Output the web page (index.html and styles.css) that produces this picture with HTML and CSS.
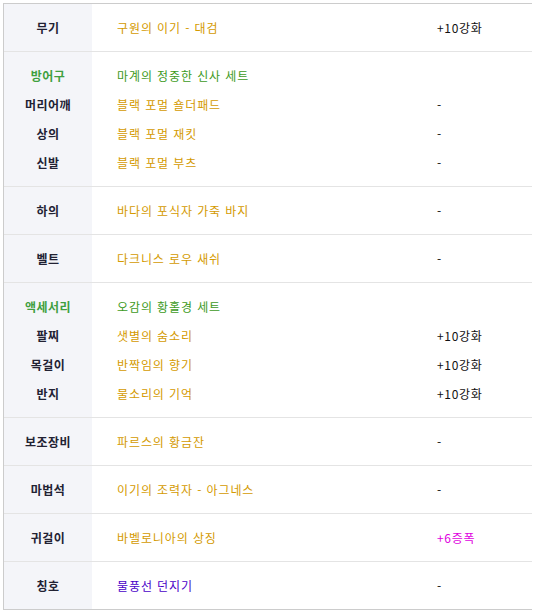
FILE: index.html
```html
<!DOCTYPE html>
<html lang="ko">
<head>
<meta charset="utf-8">
<link rel="stylesheet" href="styles.css">
</head>
<body>
<div class="equip">
  <div class="sec">
    <div class="col lab"><div class="ln">무기</div></div>
    <div class="col item"><div class="ln gold">구원의 이기 - 대검</div></div>
    <div class="col val"><div class="ln">+10강화</div></div>
  </div>
  <div class="sec">
    <div class="col lab">
      <div class="ln green">방어구</div>
      <div class="ln">머리어깨</div>
      <div class="ln">상의</div>
      <div class="ln">신발</div>
    </div>
    <div class="col item">
      <div class="ln setg">마계의 정중한 신사 세트</div>
      <div class="ln gold">블랙 포멀 숄더패드</div>
      <div class="ln gold">블랙 포멀 재킷</div>
      <div class="ln gold">블랙 포멀 부츠</div>
    </div>
    <div class="col val">
      <div class="ln"></div>
      <div class="ln">-</div>
      <div class="ln">-</div>
      <div class="ln">-</div>
    </div>
  </div>
  <div class="sec">
    <div class="col lab"><div class="ln">하의</div></div>
    <div class="col item"><div class="ln gold">바다의 포식자 가죽 바지</div></div>
    <div class="col val"><div class="ln">-</div></div>
  </div>
  <div class="sec">
    <div class="col lab"><div class="ln">벨트</div></div>
    <div class="col item"><div class="ln gold">다크니스 로우 새쉬</div></div>
    <div class="col val"><div class="ln">-</div></div>
  </div>
  <div class="sec">
    <div class="col lab">
      <div class="ln green">액세서리</div>
      <div class="ln">팔찌</div>
      <div class="ln">목걸이</div>
      <div class="ln">반지</div>
    </div>
    <div class="col item">
      <div class="ln setg">오감의 황홀경 세트</div>
      <div class="ln gold">샛별의 숨소리</div>
      <div class="ln gold">반짝임의 향기</div>
      <div class="ln gold">물소리의 기억</div>
    </div>
    <div class="col val">
      <div class="ln"></div>
      <div class="ln">+10강화</div>
      <div class="ln">+10강화</div>
      <div class="ln">+10강화</div>
    </div>
  </div>
  <div class="sec">
    <div class="col lab"><div class="ln">보조장비</div></div>
    <div class="col item"><div class="ln gold">파르스의 황금잔</div></div>
    <div class="col val"><div class="ln">-</div></div>
  </div>
  <div class="sec">
    <div class="col lab"><div class="ln">마법석</div></div>
    <div class="col item"><div class="ln gold">이기의 조력자 - 아그네스</div></div>
    <div class="col val"><div class="ln">-</div></div>
  </div>
  <div class="sec">
    <div class="col lab"><div class="ln">귀걸이</div></div>
    <div class="col item"><div class="ln gold">바벨로니아의 상징</div></div>
    <div class="col val"><div class="ln amp">+6증폭</div></div>
  </div>
  <div class="sec">
    <div class="col lab"><div class="ln">칭호</div></div>
    <div class="col item"><div class="ln purple">물풍선 던지기</div></div>
    <div class="col val"><div class="ln">-</div></div>
  </div>
</div>
</body>
</html>
```

FILE: styles.css
```css
* { box-sizing: border-box; }
html, body { background: #ffffff; }
body {
  margin: 3px;
  font-family: "Noto Sans CJK KR", "Noto Sans", sans-serif;
  font-size: 12px;
  color: #111111;
}
.equip {
  width: 530px;
  border: 1px solid #cccccc;
  display: flex;
  flex-direction: column;
}
.sec {
  display: flex;
  border-bottom: 1px solid #e4e4e4;
}
.sec:last-child { border-bottom: none; }
.col {
  padding: 9px 0;
}
.lab {
  width: 88px;
  background: #f4f5f9;
  text-align: center;
  font-weight: bold;
  color: #222233;
  letter-spacing: 0.4px;
}
.item {
  width: 320px;
  padding-left: 25px;
  letter-spacing: 0.9px;
}
.val {
  flex: 1;
  padding-left: 25px;
  color: #111111;
  letter-spacing: 0.7px;
}
.ln {
  height: 29px;
  line-height: 29px;
  white-space: nowrap;
}
.green { color: #3fa03f; }
.setg { color: #3d9a1c; }
.gold { color: #d49a00; }
.purple { color: #4a00c8; }
.amp { color: #e000e0; }
```
